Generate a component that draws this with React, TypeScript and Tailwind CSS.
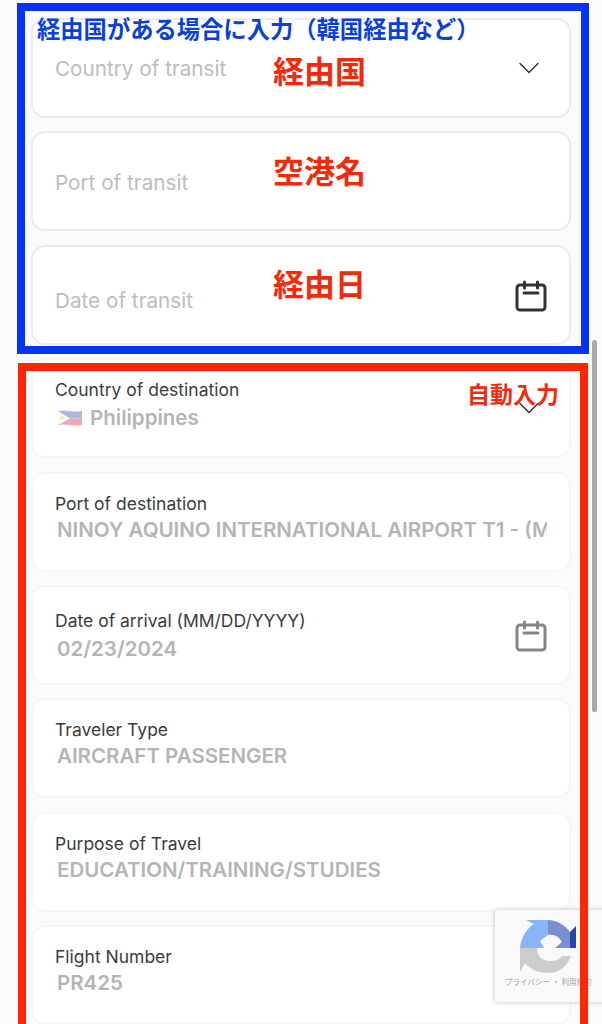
import React from 'react';
import { ChevronDown } from 'lucide-react';

interface FieldProps {
  label?: string;
  value?: string;
  placeholder?: string;
  icon?: 'chevron' | 'calendar';
  flag?: boolean;
  roomy?: boolean;
  top: string;
}

const CalendarIcon = ({ className }: { className: string }) => (
  <svg
    viewBox="0 0 32 32"
    fill="none"
    stroke="currentColor"
    strokeWidth="3"
    strokeLinecap="round"
    className={className}
  >
    <rect x="2" y="5" width="28" height="25" rx="3" />
    <path d="M9.500 2v6M22.500 2v6M9 13h14" />
  </svg>
);

const PhFlag = () => (
  <svg viewBox="0 0 26 18" className="h-[18px] w-[26px] shrink-0 opacity-50">
    <path d="M1 2c8-2 16 2 24 0v7c-8 2-16-2-24 0z" fill="#5b78c9" />
    <path d="M1 9c8-2 16 2 24 0v7c-8 2-16-2-24 0z" fill="#e0566a" />
    <path d="M1 2l12 7.500L1 16z" fill="#f4f4f4" />
    <circle cx="5" cy="9" r="1.800" fill="#efc94c" />
  </svg>
);

const RecaptchaIcon = () => (
  <svg viewBox="0 0 57 55" className="ml-[15px] h-[55px] w-[57px]">
    <path d="M0 28C1 17 7 8 14 4L6 0H28V15L20 21L24 28Z" fill="#8ab4f8" />
    <path d="M28 0C37 0 45 5 50 12V28H35L42 22C39 17 35 14 28 15Z" fill="#7a8fd0" />
    <path d="M50 12L56 6V28H50Z" fill="#2746b0" />
    <path d="M0 28H17C17 36 22 41 30 41C36 41 40 39 42 36H51C46 48 38 53 28 53C18 53 10 49 5 43L0 52Z" fill="#cccccc" />
  </svg>
);

const Field = ({ label, value, placeholder, icon, flag, roomy, top }: FieldProps) => (
  <div
    className={`flex h-[100px] items-start justify-between rounded-[14px] border-2 bg-white pl-[22px] pr-[22px] ${
      placeholder ? 'border-[#ececec]' : 'border-[#f6f6f6]'
    }`}
  >
    <div className={`min-w-0 flex-1 overflow-hidden ${top}`}>
      {placeholder ? (
        <p className="text-[20.700px] leading-[26px] text-[#bdbdbd]">{placeholder}</p>
      ) : (
        <>
          <p className="text-[17.500px] leading-[24px] text-[#3c3c3c]">{label}</p>
          <div className={`flex items-center gap-[7px] pl-[2px] ${roomy ? 'mt-px' : '-mt-px'}`}>
            {flag && <PhFlag />}
            <p className="whitespace-nowrap text-[20.500px] font-semibold leading-[30px] text-[#b5b5b5]">
              {value}
            </p>
          </div>
        </>
      )}
    </div>
    {icon === 'chevron' && (
      <ChevronDown className="mt-[30px] h-[36px] w-[36px] shrink-0 text-[#333333]" strokeWidth={1} />
    )}
    {icon === 'calendar' && (
      <CalendarIcon
        className={`mt-[33px] h-[32px] w-[32px] shrink-0 ${placeholder ? 'text-[#333333]' : 'text-[#858585]'}`}
      />
    )}
  </div>
);

const App = () => (
  <div
    className="relative h-[1024px] overflow-hidden bg-[#fbfbfb]"
    style={{ fontFamily: '"Inter", "Noto Sans CJK JP", sans-serif' }}
  >
    <div className="flex flex-col gap-[13.375px] px-[31px] pt-[18px]">
      <Field placeholder="Country of transit" icon="chevron" top="pt-[36px]" />
      <Field placeholder="Port of transit" top="pt-[37px]" />
      <Field placeholder="Date of transit" icon="calendar" top="pt-[41px]" />
      <Field label="Country of destination" value="Philippines" flag roomy icon="chevron" top="pt-[18px]" />
      <Field label="Port of destination" value="NINOY AQUINO INTERNATIONAL AIRPORT T1 - (MNL)" top="pt-[18px]" />
      <Field label="Date of arrival (MM/DD/YYYY)" value="02/23/2024" roomy icon="calendar" top="pt-[22px]" />
      <Field label="Traveler Type" value="AIRCRAFT PASSENGER" top="pt-[18px]" />
      <Field label="Purpose of Travel" value="EDUCATION/TRAINING/STUDIES" top="pt-[18px]" />
      <Field label="Flight Number" value="PR425" top="pt-[18px]" />
    </div>

    {/* scrollbar */}
    <div className="absolute left-[592px] top-[340px] h-[372px] w-[5px] rounded-full bg-[#a9a9a9]" />

    {/* recaptcha badge */}
    <div className="absolute left-[495px] top-[910px] flex h-[92px] w-[120px] flex-col items-start bg-[#f9f9f9] pl-[10px] pt-[10px] shadow-[0_0_5px_rgba(0,0,0,0.25)]">
      <RecaptchaIcon />
      <p className="mt-[2px] whitespace-nowrap text-[7.500px] leading-[12px] text-[#a0a0a0]">
        プライバシー ・ 利用規約
      </p>
    </div>

    {/* annotation frames */}
    <div className="absolute left-[17px] top-[3px] h-[351px] w-[572px] border-8 border-[#0433ff]" />
    <div className="absolute left-[18px] top-[363px] h-[700px] w-[570px] border-8 border-[#ff2600]" />

    {/* annotation labels */}
    <p className="absolute left-[37px] top-[15px] whitespace-nowrap text-[23.300px] font-bold leading-[30px] text-[#0a3fdc]">
      経由国がある場合に入力（韓国経由など）
    </p>
    <p className="absolute left-[273px] top-[52px] text-[31px] font-bold leading-[40px] text-[#f5290a]">経由国</p>
    <p className="absolute left-[273px] top-[152px] text-[31px] font-bold leading-[40px] text-[#f5290a]">空港名</p>
    <p className="absolute left-[273px] top-[265px] text-[31px] font-bold leading-[40px] text-[#f5290a]">経由日</p>
    <p className="absolute left-[467px] top-[380px] text-[23px] font-bold leading-[30px] text-[#f5290a]">自動入力</p>
  </div>
);

export default App;
